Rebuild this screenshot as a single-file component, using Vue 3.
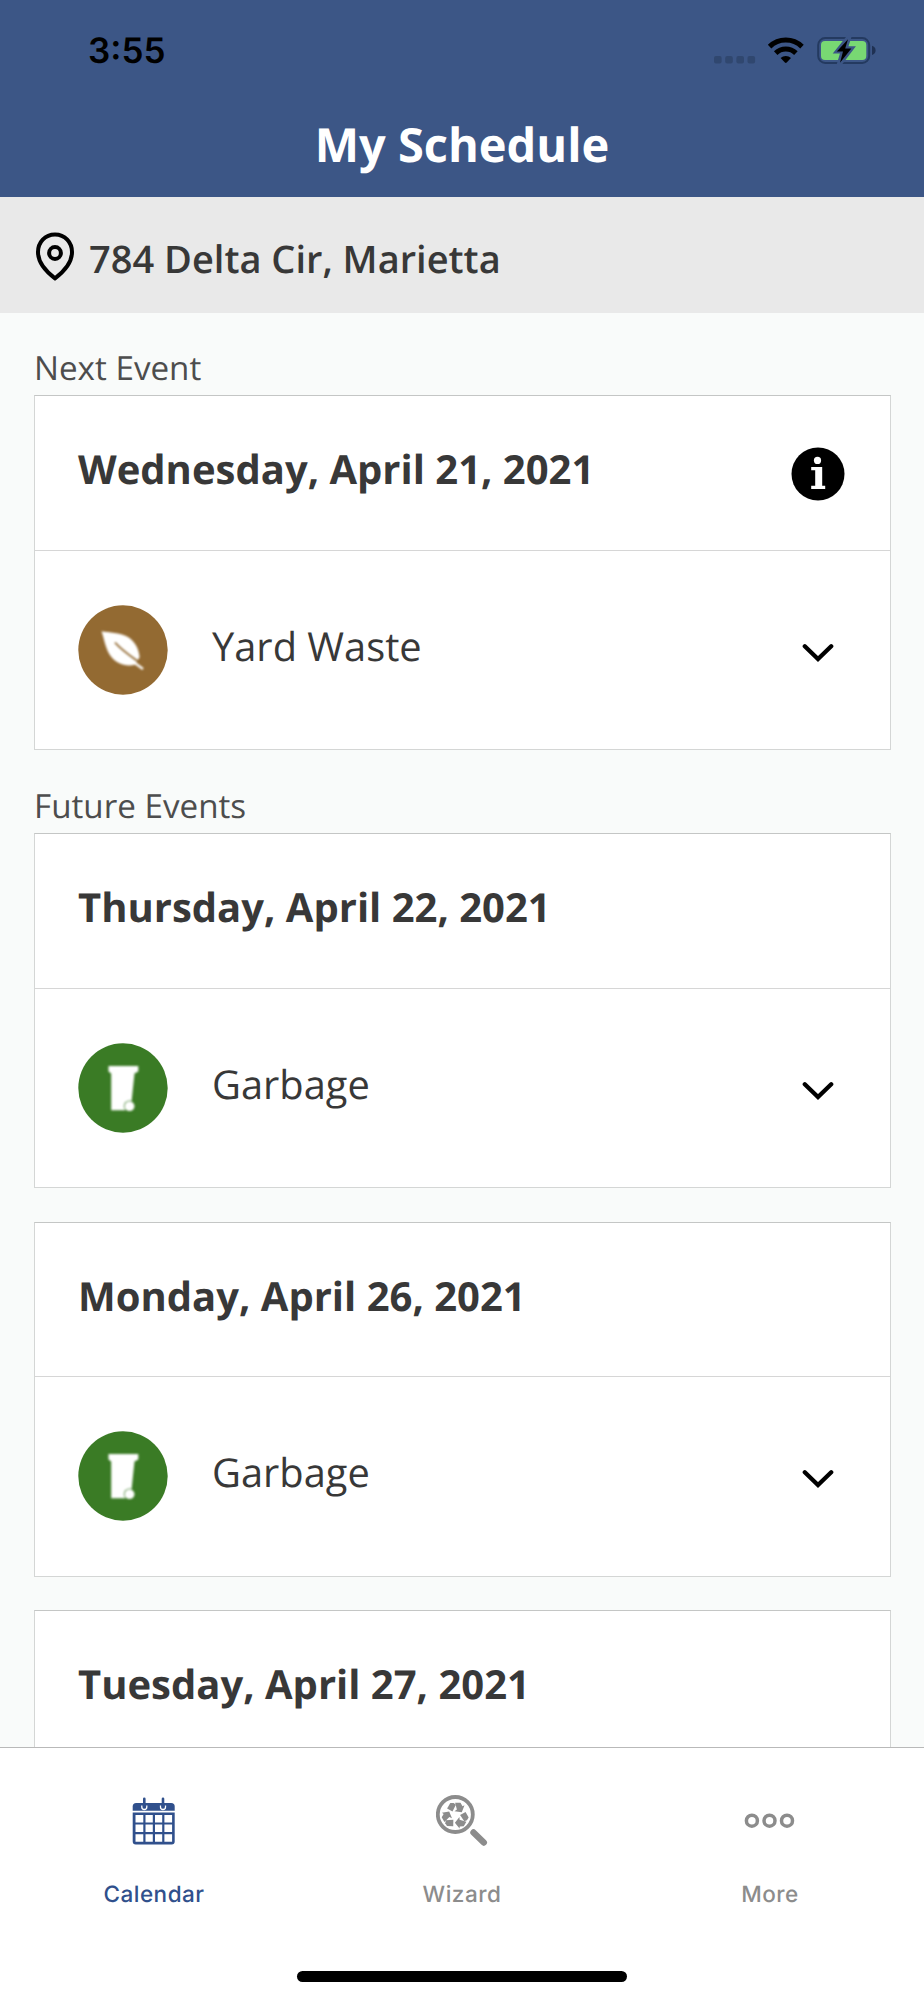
<script setup>
const nextEvents = [
  { date: 'Wednesday, April 21, 2021', info: true, label: 'Yard Waste', kind: 'leaf' }
]
const futureEvents = [
  { date: 'Thursday, April 22, 2021', label: 'Garbage', kind: 'bin' },
  { date: 'Monday, April 26, 2021', label: 'Garbage', kind: 'bin' },
  { date: 'Tuesday, April 27, 2021' }
]
const sections = [
  { id: 'next', title: 'Next Event', events: nextEvents },
  { id: 'future', title: 'Future Events', events: futureEvents }
]
</script>

<template>
  <div class="screen">
    <header class="top">
      <div class="status">
        <span class="time">3:55</span>
        <svg class="status-icons" width="170" height="30" viewBox="0 0 170 30">
          <g fill="#30476f">
            <rect x="4" y="21" width="7.6" height="7.4" rx="2" />
            <rect x="15.2" y="21" width="7.6" height="7.4" rx="2" />
            <rect x="26.4" y="21" width="7.6" height="7.4" rx="2" />
            <rect x="37.5" y="21" width="7.6" height="7.4" rx="2" />
          </g>
          <g fill="none" stroke="#000" stroke-width="5">
            <path d="M59.6 11.6 A23.3 23.3 0 0 1 92 11.6" />
            <path d="M65.7 18.1 A14.4 14.4 0 0 1 85.9 18.1" />
          </g>
          <path d="M70.6 23.1 A7.4 7.4 0 0 1 81 23.1 L76.7 27.5 Q75.8 28.3 74.9 27.5 Z" fill="#000" />
          <rect x="108.2" y="3.1" width="51" height="24.8" rx="7" fill="none" stroke="#243a60" stroke-width="2" />
          <rect x="111" y="5.9" width="45.3" height="19.2" rx="4" fill="#78d873" />
          <path d="M162 10.8 Q165.6 12 165.6 15.4 Q165.6 18.8 162 20 Z" fill="#1f3153" />
          <path d="M137.4 1.500 L124.400 17.800 H131 L127.500 29.500 L131 29.500 L144.300 12 H137.400 L140.800 1.500 Z" fill="#3c5686" stroke="#3c5686" stroke-width="1.600" />
          <path d="M138 4.200 L126.800 16.600 H133 L130 27.800 L141.400 13.600 H135.200 Z" fill="#000" />
        </svg>
      </div>
      <h1 class="title">My Schedule</h1>
    </header>

    <div class="address">
      <svg class="pin" width="40" height="52" viewBox="0 0 40 52" fill="none" stroke="#000" stroke-width="4">
        <path d="M20 4.400 C10 4.400 3 12.200 3 22 C3 32.300 9.600 40.500 20 48.300 C30.400 40.500 37 32.300 37 22 C37 12.200 30 4.400 20 4.400 Z" />
        <circle cx="20" cy="23" r="5.900" />
      </svg>
      <span class="address-text">784 Delta Cir, Marietta</span>
    </div>

    <main class="content">
      <section v-for="s in sections" :key="s.id" class="section">
        <h2 class="section-title">{{ s.title }}</h2>
        <div class="cards">
          <article v-for="e in s.events" :key="e.date" class="card">
            <div class="card-head">
              <span class="date">{{ e.date }}</span>
              <svg v-if="e.info" class="info" width="54" height="54" viewBox="0 0 54 54">
                <circle cx="27" cy="27" r="26.500" fill="#000" />
                <circle cx="26.500" cy="13.400" r="3.600" fill="#fff" />
                <path d="M20.200 20 H31.200 V38.700 H34.200 V42 H20.200 V38.700 H24.200 V23.300 H20.200 Z" fill="#fff" />
              </svg>
            </div>
            <div v-if="e.label" class="card-row">
              <svg class="badge" width="90" height="90" viewBox="0 0 90 90">
                <template v-if="e.kind === 'leaf'">
                  <circle cx="45" cy="45" r="44.700" fill="#936a32" />
                  <g class="soft">
                    <path d="M23.500 26.200 C31 27.500 42 27.500 49 31.500 C57 36 61 44 61.600 52.500 L60 54.500 L57.500 59.500 C48 62.500 38.500 58.500 33 51.500 C27.500 44 26.500 35 23.500 26.200 Z" fill="#fff" />
                    <path d="M37 37.500 C43 44.500 51 50 60 56.500" fill="none" stroke="#936a32" stroke-width="1.900" />
                    <path d="M55.500 57 L65 64" stroke="#fff" stroke-width="2.300" />
                  </g>
                </template>
                <template v-else>
                  <circle cx="45" cy="45" r="44.700" fill="#3a7b25" />
                  <g class="soft">
                    <path d="M30.500 23 H60.300 V28.500 L56.500 30.500 L53.500 59 L48 67.200 H33.200 V30.500 L30.500 28.500 Z" fill="#fff" />
                    <circle cx="51.500" cy="63.200" r="5.600" fill="#3a7b25" />
                    <circle cx="51.500" cy="63.200" r="4.900" fill="#fff" />
                  </g>
                </template>
              </svg>
              <span class="label">{{ e.label }}</span>
              <svg class="chevron" width="32" height="20" viewBox="0 0 32 20">
                <path d="M2.800 3.200 L16 16 L29.200 3.200" fill="none" stroke="#000" stroke-width="4.300" stroke-linecap="round" />
              </svg>
            </div>
          </article>
        </div>
      </section>
    </main>

    <nav class="tabs">
      <div class="tab-list">
        <div class="tab active">
          <svg class="calendar" width="44" height="50" viewBox="0 0 44 50">
            <path d="M.7 13.800 V9.500 Q.7 6 4.200 6 H39.200 Q42.700 6 42.700 9.500 V13.800 Z" fill="#30508c" />
            <path d="M9.800 8.500 V10 A2.500 2.500 0 0 0 14.800 10 V8.500 M28.500 8.500 V10 A2.500 2.500 0 0 0 33.500 10 V8.500" fill="none" stroke="#fff" stroke-width="1.300" />
            <path d="M12.300 1.800 V9.800 M31 1.800 V9.800" stroke="#30508c" stroke-width="2.600" stroke-linecap="round" />
            <path fill-rule="evenodd" fill="#30508c" d="M.7 15.400 H42.700 V44.600 Q42.700 47.600 39.700 47.600 H3.700 Q.7 47.600 .7 44.600 Z M3.500 18.100 V25.600 H11.300 V18.100 Z M13.500 18.100 V25.600 H20.800 V18.100 Z M23 18.100 V25.600 H30.200 V18.100 Z M32.400 18.100 V25.600 H40.100 V18.100 Z M3.500 27.600 V35.100 H11.300 V27.600 Z M13.500 27.600 V35.100 H20.800 V27.600 Z M23 27.600 V35.100 H30.200 V27.600 Z M32.400 27.600 V35.100 H40.100 V27.600 Z M3.500 37.200 V44.800 H11.300 V37.200 Z M13.500 37.200 V44.800 H20.800 V37.200 Z M23 37.200 V44.800 H30.200 V37.200 Z M32.400 37.200 V44.800 H40.100 V37.200 Z" />
          </svg>
          <span class="tab-label">Calendar</span>
        </div>
        <div class="tab">
          <svg width="52" height="52" viewBox="0 0 52 52">
            <circle cx="19.300" cy="19.500" r="17.500" fill="none" stroke="#8c8c8c" stroke-width="3.800" />
            <path d="M37.500 37.500 L47.800 47.500" stroke="#8c8c8c" stroke-width="6.400" stroke-linecap="round" />
            <g transform="translate(19.300 20.500)" fill="#8c8c8c">
              <g v-for="a in [0, 120, 240]" :key="a" :transform="'rotate(' + a + ')'">
                <path d="M-8.200 -7.100 L-5 -12.500 H-1.600 L.6 -10.700 L-2.800 -3.900 Z" />
                <path d="M-.2 -12.700 H5.200 L7.200 -9.300 L9.200 -10.200 L6.500 -3.300 L-.8 -4.300 L1.600 -5.900 Z" />
              </g>
            </g>
          </svg>
          <span class="tab-label">Wizard</span>
        </div>
        <div class="tab">
          <svg width="52" height="16" viewBox="0 0 52 16" fill="none" stroke="#8c8c8c" stroke-width="3.500">
            <circle cx="7.900" cy="7.700" r="5.500" />
            <circle cx="25.500" cy="7.700" r="5.500" />
            <circle cx="43" cy="7.700" r="5.500" />
          </svg>
          <span class="tab-label">More</span>
        </div>
      </div>
      <div class="home"></div>
    </nav>
  </div>
</template>

<style>
body {
  margin: 0;
}
</style>

<style scoped>
.screen {
  width: 924px;
  height: 2000px;
  display: flex;
  flex-direction: column;
  overflow: hidden;
  background: #f9fbfa;
  font-family: 'Open Sans', 'Noto Sans', sans-serif;
  text-rendering: geometricPrecision;
  color: #383838;
}
svg {
  display: block;
  flex: none;
}
.top {
  flex: none;
  height: 197px;
  background: #3c5686;
}
.status {
  display: flex;
  justify-content: space-between;
  height: 94px;
  padding: 0 44px 0 88px;
}
.time {
  padding-top: 30px;
  font: 600 35px/42px Inter, sans-serif;
  color: #000;
}
.status-icons {
  margin-top: 35px;
}
.title {
  margin: 0;
  height: 100px;
  font-size: 47px;
  line-height: 100px;
  font-weight: 700;
  text-align: center;
  color: #fff;
}
.address {
  flex: none;
  box-sizing: border-box;
  height: 116px;
  padding: 33px 35px 0;
  display: flex;
  gap: 14px;
  background: #e9e9e9;
}
.address-text {
  font-size: 38px;
  line-height: 58px;
  font-weight: 600;
}
.content {
  flex: 1;
  min-height: 0;
  overflow: hidden;
  padding: 31px 33px 0 34px;
}
.section {
  margin-bottom: 32px;
}
.section-title {
  margin: 0;
  height: 51px;
  font-size: 33.200px;
  line-height: 48px;
  font-weight: 400;
  color: #4d4d4d;
}
.cards {
  display: flex;
  flex-direction: column;
  gap: 33.500px;
}
.card {
  box-sizing: border-box;
  height: 355px;
  background: #fff;
  border: 1px solid #d4d6d5;
  border-top-color: #c4c6c5;
}
.card-head {
  box-sizing: border-box;
  height: 154.500px;
  border-bottom: 1px solid #d6d6d6;
  padding: 0 45px 0 43px;
  display: flex;
  justify-content: space-between;
}
.date {
  font-size: 40px;
  font-weight: 700;
  line-height: 145px;
}
.info {
  margin-top: 51px;
}
.card-row {
  height: 198px;
  padding: 0 56px 0 43px;
  display: flex;
  align-items: center;
}
.soft {
  filter: blur(0.8px);
}
.label {
  flex: 1;
  margin-left: 44px;
  padding-bottom: 8px;
  font-size: 39.800px;
  line-height: 54px;
}
.chevron {
  margin-top: 6px;
}
.tabs {
  flex: none;
  box-sizing: border-box;
  height: 253px;
  border-top: 1px solid #b9b9b9;
  background: #fff;
  display: flex;
  flex-direction: column;
  align-items: center;
}
.tab-list {
  display: flex;
  width: 100%;
  height: 223px;
}
.tab {
  flex: 1;
  display: grid;
  grid-template-rows: 146px 30px;
  align-content: start;
  justify-items: center;
  align-items: center;
  color: #8c8c8c;
}
.tab.active {
  color: #30508c;
}
.calendar {
  margin-top: 2px;
}
.tab-label {
  margin-top: -29px;
  font: 450 22.500px/28px Inter, sans-serif;
  letter-spacing: 0.500px;
}
.home {
  width: 330px;
  height: 11px;
  border-radius: 6px;
  background: #000;
}
</style>
